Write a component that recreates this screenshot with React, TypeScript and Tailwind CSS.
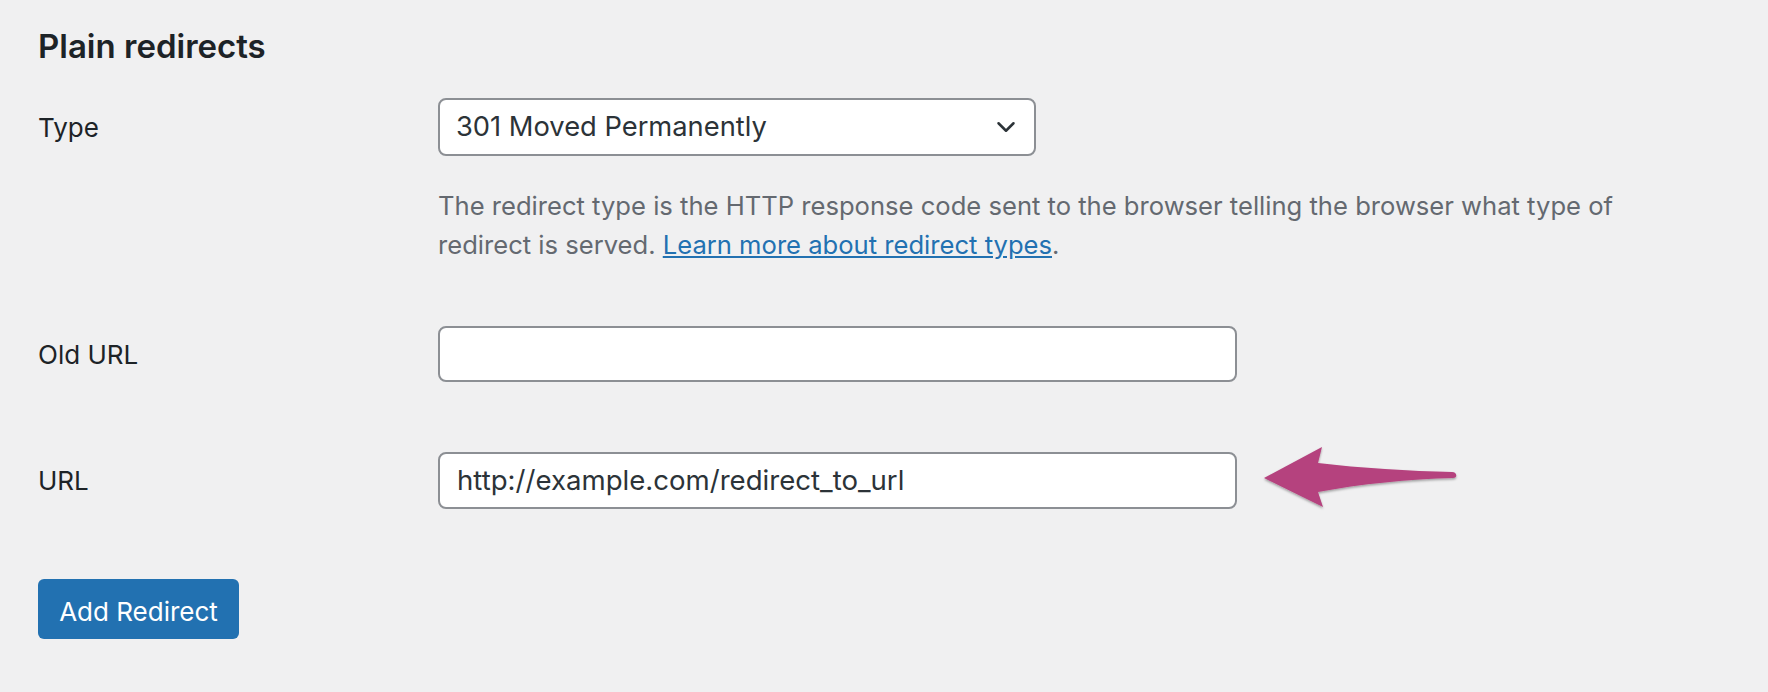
import React from "react";
import { ChevronDown } from "lucide-react";

const font = { fontFamily: "Inter, 'Noto Sans', sans-serif" };

const Label: React.FC<{ children: React.ReactNode }> = ({ children }) => (
    <div className="w-[400px] shrink-0 text-[26px] text-[#1d2327]">{children}</div>
);

const Arrow: React.FC = () => (
    <svg
        className="absolute left-[1258px] top-[440px]"
        width="210"
        height="80"
        viewBox="1258 440 210 80"
    >
        <defs>
            <filter id="sh" x="-10%" y="-20%" width="120%" height="140%">
                <feDropShadow dx="0" dy="1.5" stdDeviation="1.2" floodColor="#000" floodOpacity="0.35" />
            </filter>
        </defs>
        <path
            d="M1264 478 L1322 447 L1318 463 C1360 468 1410 471 1452 472 C1457 472 1458 478 1453 478 C1410 479 1360 484 1318 492 L1323 507 Z"
            fill="#b5427e"
            filter="url(#sh)"
        />
    </svg>
);

export default function App() {
    return (
        <div className="relative w-full min-h-[692px] bg-[#f0f0f1] pl-[38px] pt-[24px]" style={font}>
            <h2 className="text-[33px] leading-[44px] font-semibold text-[#1d2327]">Plain redirects</h2>

            <div className="mt-[30px] flex items-start">
                <div className="w-[400px] shrink-0 h-[58px] flex items-center text-[26px] text-[#1d2327]">Type</div>
                <div>
                    <div className="relative w-[598px] h-[58px] bg-white border-2 border-[#8c8f94] rounded-[8px] flex items-center pl-[16px] text-[27.3px] text-[#2c3338]">
                        301 Moved Permanently
                        <ChevronDown
                            className="absolute right-[13px] top-1/2 -translate-y-1/2 text-[#2c3338]"
                            size={30}
                            strokeWidth={2}
                        />
                    </div>
                    <p className="mt-[30px] w-[1200px] text-[25.6px] leading-[39px] text-[#646970]">
                        The redirect type is the HTTP response code sent to the browser telling the browser what type of
                        redirect is served.{" "}
                        <a href="#" className="text-[#2271b1] underline">
                            Learn more about redirect types
                        </a>
                        .
                    </p>
                </div>
            </div>

            <div className="mt-[62px] flex items-center">
                <Label>Old URL</Label>
                <div className="w-[799px] h-[56px] bg-white border-2 border-[#8c8f94] rounded-[8px]" />
            </div>

            <div className="mt-[70px] flex items-center">
                <Label>URL</Label>
                <div className="w-[799px] h-[57px] bg-white border-2 border-[#8c8f94] rounded-[8px] flex items-center pl-[17px] text-[27.6px] text-[#2c3338]">
                    http://example.com/redirect_to_url
                </div>
            </div>

            <button className="mt-[70px] w-[201px] h-[60px] pt-[5px] bg-[#2271b1] rounded-[6px] text-white text-[26px] flex items-center justify-center">
                Add Redirect
            </button>

            <Arrow />
        </div>
    );
}
